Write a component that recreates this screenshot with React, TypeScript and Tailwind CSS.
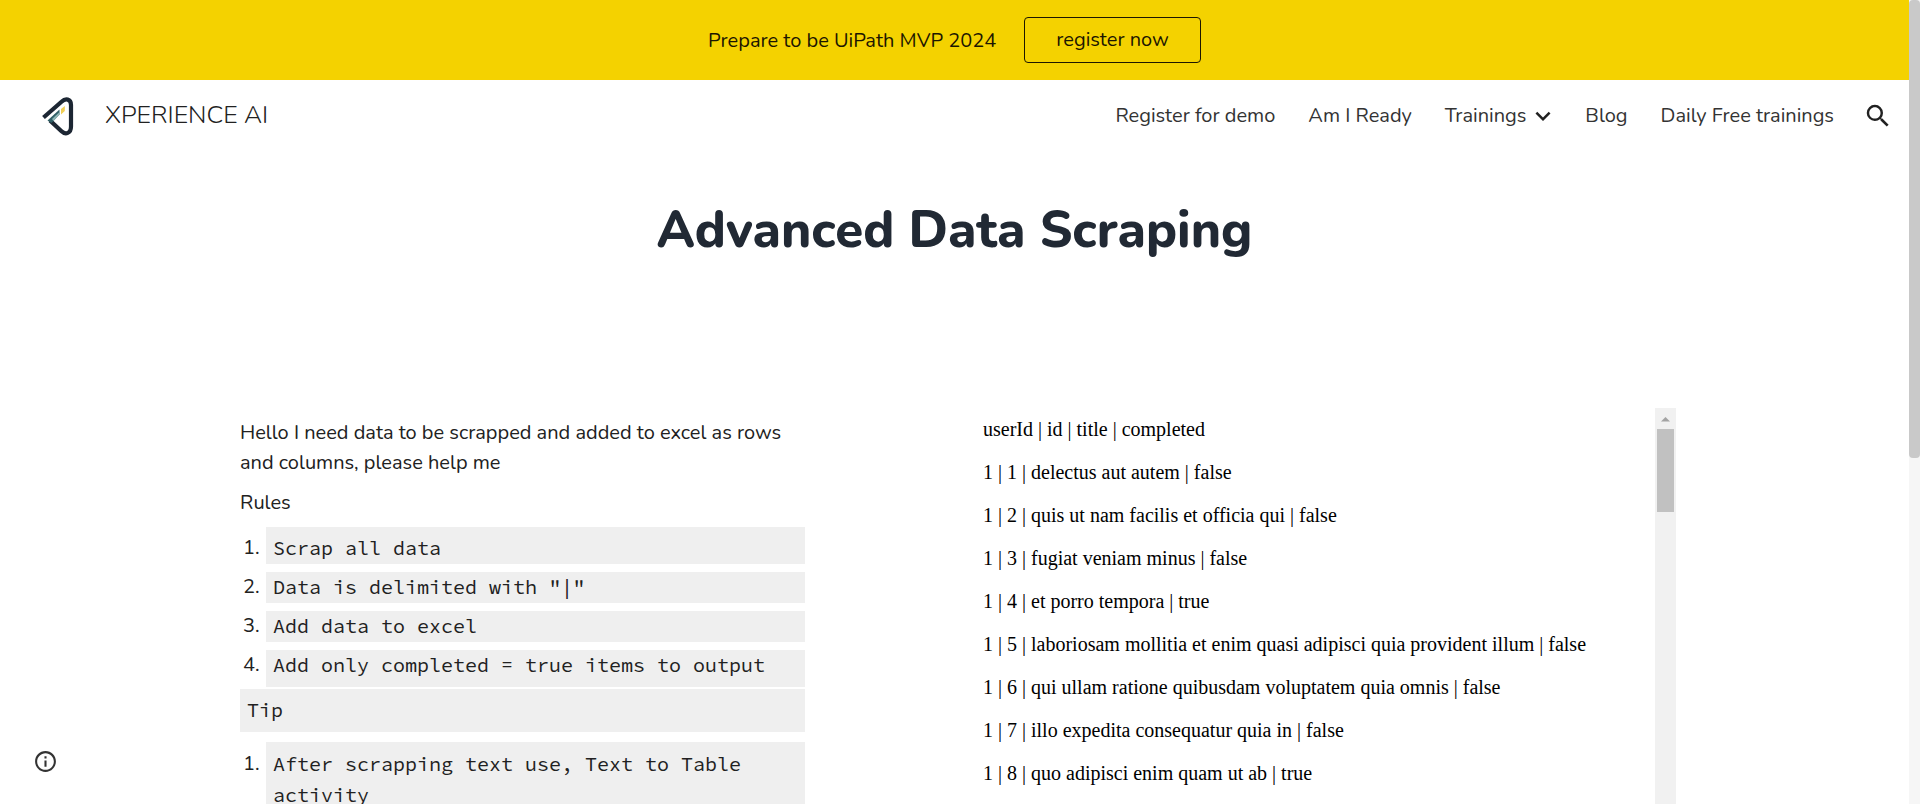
import { MdInfoOutline, MdKeyboardArrowDown, MdSearch } from "react-icons/md";

const rows = [
  "userId | id | title | completed",
  "1 | 1 | delectus aut autem | false",
  "1 | 2 | quis ut nam facilis et officia qui | false",
  "1 | 3 | fugiat veniam minus | false",
  "1 | 4 | et porro tempora | true",
  "1 | 5 | laboriosam mollitia et enim quasi adipisci quia provident illum | false",
  "1 | 6 | qui ullam ratione quibusdam voluptatem quia omnis | false",
  "1 | 7 | illo expedita consequatur quia in | false",
  "1 | 8 | quo adipisci enim quam ut ab | true",
];

function Logo() {
  return (
    <svg viewBox="0 0 32 40" className="h-10 w-8" fill="none" role="img" aria-label="Xperience AI">
      <path d="M1.5 21.5 19.5 5.8C23.5 2 29 2.8 29 9V30.5C29 37.5 23.5 39 19.5 35.2L8 24.5" stroke="#1c2633" strokeWidth="4.2" />
      <path d="M5.5 24.5 17.5 13.5V18.5L9.5 27Z" fill="#2f5f66" />
      <path d="M10 23 17.5 16V18.5L11.5 25Z" fill="#8fb5b5" />
      <path d="M19 13 22.8 10V15L19 18.5Z" fill="#f0cf55" />
    </svg>
  );
}

function Banner() {
  return (
    <div className="flex h-20 shrink-0 items-center justify-center gap-7 bg-[#f4d200] text-xl text-[#1c1600]">
      <p className="pt-0.5">Prepare to be UiPath MVP 2024</p>
      <a href="#register" className="flex h-[46px] items-center rounded border border-[#1c1600] px-[31px]">
        register now
      </a>
    </div>
  );
}

function Header() {
  return (
    <header className="flex h-[70px] shrink-0 items-center justify-between pt-px pr-4 pl-[42px] text-[#212121]">
      <a href="#home" className="flex items-center gap-[31px] text-[25px] font-light">
        <Logo />
        XPERIENCE AI
      </a>
      <nav className="flex items-center gap-[33px] text-xl text-[#333333]">
        <a href="#demo">Register for demo</a>
        <a href="#ready">Am I Ready</a>
        <a href="#trainings" className="-mr-1.5 flex items-center gap-0.5">
          Trainings
          <MdKeyboardArrowDown className="size-[30px] text-[#212121]" />
        </a>
        <a href="#blog">Blog</a>
        <a href="#daily">Daily Free trainings</a>
        <button type="button" aria-label="Search" className="-ml-1 text-[#212121]">
          <MdSearch className="size-[30px]" />
        </button>
      </nav>
    </header>
  );
}

const code =
  "font-['Source_Code_Pro','Noto_Sans_Mono','Liberation_Mono',monospace] bg-[#efefef] px-[7px]";

function Numbered({ n, text, box }: { n: number; text: string; box: string }) {
  return (
    <li className="flex">
      <span className={`w-[26px] shrink-0 pl-[3px] ${box}`}>{n}.</span>
      <code className={`min-w-0 flex-1 ${code} ${box}`}>{text}</code>
    </li>
  );
}

function Brief() {
  return (
    <section className="pt-2.5 text-xl leading-[30px] text-[#212121]">
      <p>Hello I need data to be scrapped and added to excel as rows and columns, please help me</p>
      <p className="mt-2.5">Rules</p>
      <ol className="mt-[9px] flex flex-col gap-2">
        <Numbered n={1} text="Scrap all data" box="pt-1.5 pb-px" />
        <Numbered n={2} text={'Data is delimited with "|"'} box="pb-px" />
        <Numbered n={3} text="Add data to excel" box="pb-px" />
        <Numbered n={4} text="Add only completed = true items to output" box="pb-[7px]" />
      </ol>
      <code className={`mt-0.5 block pt-1.5 pb-[7px] ${code}`}>Tip</code>
      <ol className="mt-2.5 leading-[31px]">
        <Numbered n={1} text="After scrapping text use, Text to Table activity" box="py-1.5" />
      </ol>
    </section>
  );
}

function DataFrame() {
  return (
    <section className="flex text-black">
      <div className="flex min-w-0 flex-1 flex-col gap-5 py-2.5 pl-2 font-['Liberation_Serif',serif] text-xl leading-[23px]">
        {rows.map((row) => (
          <p key={row}>{row}</p>
        ))}
      </div>
      <div className="flex w-[21px] shrink-0 flex-col items-center bg-[#f1f1f1]">
        <svg viewBox="0 0 21 21" className="h-[21px] w-[21px]" aria-hidden="true">
          <path d="M6 13.5 10.5 9 15 13.5Z" fill="#a3a3a3" />
        </svg>
        <div className="h-[83px] w-[17px] bg-[#c1c1c1]" />
      </div>
    </section>
  );
}

export default function App() {
  return (
    <div className="flex h-screen overflow-hidden bg-white font-['Nunito','Lato',sans-serif]">
      <div className="flex min-w-0 flex-1 flex-col">
        <Banner />
        <Header />
        <main className="flex min-h-0 flex-1 flex-col">
          <h1 className="pt-[50px] text-center text-[51px] leading-[60px] font-extrabold text-[#212934]">
            Advanced Data Scraping
          </h1>
          <div className="mt-[148px] grid flex-1 grid-cols-[565fr_701fr] gap-[170px] pr-[233px] pl-60">
            <Brief />
            <DataFrame />
          </div>
        </main>
      </div>
      <div className="flex w-[11px] shrink-0 bg-[#f6f6f6]">
        <div className="h-[57%] w-full rounded bg-[#c9c9c9]" />
      </div>
      <button type="button" aria-label="Site information" className="fixed bottom-[30px] left-[33px] text-[#333333]">
        <MdInfoOutline className="size-[25px]" />
      </button>
    </div>
  );
}
